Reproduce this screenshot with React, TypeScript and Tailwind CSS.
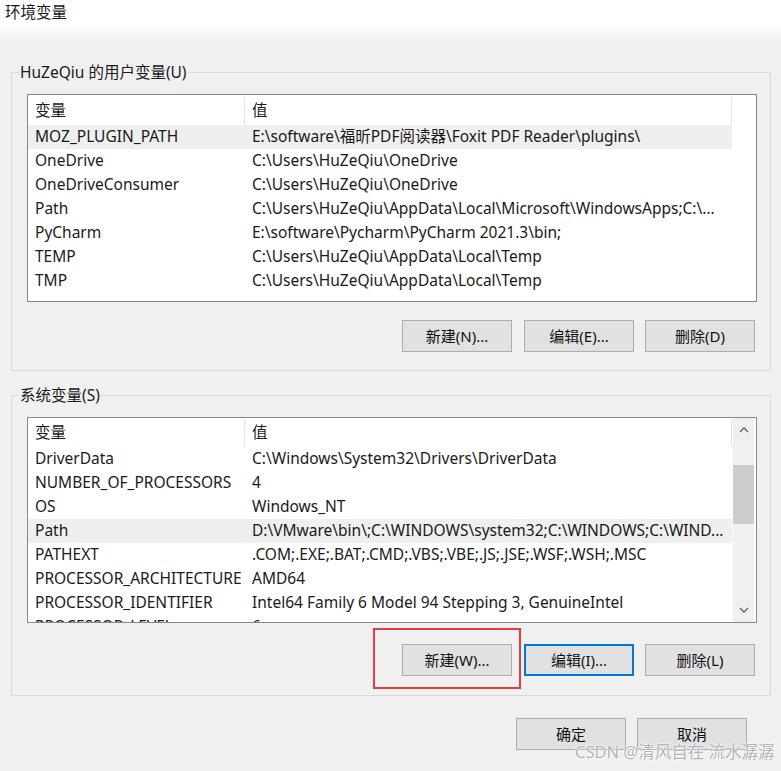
import React from 'react';

const userVars: [string, string][] = [
  ['MOZ_PLUGIN_PATH', 'E:\\software\\福昕PDF阅读器\\Foxit PDF Reader\\plugins\\'],
  ['OneDrive', 'C:\\Users\\HuZeQiu\\OneDrive'],
  ['OneDriveConsumer', 'C:\\Users\\HuZeQiu\\OneDrive'],
  ['Path', 'C:\\Users\\HuZeQiu\\AppData\\Local\\Microsoft\\WindowsApps;C:\\...'],
  ['PyCharm', 'E:\\software\\Pycharm\\PyCharm 2021.3\\bin;'],
  ['TEMP', 'C:\\Users\\HuZeQiu\\AppData\\Local\\Temp'],
  ['TMP', 'C:\\Users\\HuZeQiu\\AppData\\Local\\Temp'],
];

const sysVars: [string, string][] = [
  ['DriverData', 'C:\\Windows\\System32\\Drivers\\DriverData'],
  ['NUMBER_OF_PROCESSORS', '4'],
  ['OS', 'Windows_NT'],
  ['Path', 'D:\\VMware\\bin\\;C:\\WINDOWS\\system32;C:\\WINDOWS;C:\\WIND...'],
  ['PATHEXT', '.COM;.EXE;.BAT;.CMD;.VBS;.VBE;.JS;.JSE;.WSF;.WSH;.MSC'],
  ['PROCESSOR_ARCHITECTURE', 'AMD64'],
  ['PROCESSOR_IDENTIFIER', 'Intel64 Family 6 Model 94 Stepping 3, GenuineIntel'],
  ['PROCESSOR_LEVEL', '6'],
];

function Btn({ label, focused }: { label: string; focused?: boolean }) {
  return (
    <button
      className={`h-[32px] w-[110px] bg-[#e1e1e1] text-[15px] text-[#111] ${
        focused ? 'border-2 border-[#0078d7]' : 'border border-[#adadad]'
      }`}
    >
      {label}
    </button>
  );
}

function Header() {
  return (
    <div className="flex h-[28px] shrink-0 items-center bg-white">
      <div className="flex h-full w-[217px] items-center border-r border-[#e5e5e5] pl-[7px]">变量</div>
      <div className="flex h-full w-[487px] items-center border-r border-[#e5e5e5] pl-[7px]">值</div>
    </div>
  );
}

function Rows({ rows, selected }: { rows: [string, string][]; selected: number }) {
  return (
    <>
      {rows.map(([k, v], i) => (
        <div
          key={k + i}
          className={`flex h-[24px] w-[704px] shrink-0 items-center whitespace-nowrap ${i === selected ? 'bg-[#efefef]' : ''}`}
        >
          <div className="w-[217px] overflow-hidden pl-[7px]">{k}</div>
          <div className="w-[487px] overflow-hidden pl-[7px]">{v}</div>
        </div>
      ))}
    </>
  );
}

function Chevron({ up }: { up?: boolean }) {
  return (
    <svg width="10" height="6" viewBox="0 0 10 6" className={up ? '' : 'rotate-180'}>
      <path d="M1 5 L5 1 L9 5" fill="none" stroke="#606060" strokeWidth="1.3" />
    </svg>
  );
}

export default function App() {
  return (
    <div
      className="relative h-[771px] w-[781px] overflow-hidden bg-[#f0f0f0] text-[15.5px] text-[#1a1a1a]"
      style={{ fontFamily: '"Noto Sans", "Noto Sans CJK SC", sans-serif' }}
    >
      {/* title bar */}
      <div className="h-[40px] bg-gradient-to-b from-white from-60% to-[#f0f0f0] pl-[5px] pt-[1px] leading-[22px]">
        环境变量
      </div>

      {/* user variables */}
      <fieldset className="ml-[11px] mt-[22px] w-[759px] border border-[#d9d9d9] pb-[18px] pl-[15px] pr-[13px] pt-[12px]">
        <legend className="-ml-[8px] px-[1px] leading-[20px]">HuZeQiu 的用户变量(U)</legend>
        <div className="h-[208px] w-[730px] overflow-hidden border border-[#828790] bg-white pt-[2px]">
          <Header />
          <Rows rows={userVars} selected={0} />
        </div>
        <div className="mt-[18px] flex justify-end gap-[11px] pr-[2px]">
          <div className="mr-[1px]">
            <Btn label="新建(N)..." />
          </div>
          <Btn label="编辑(E)..." />
          <Btn label="删除(D)" />
        </div>
      </fieldset>

      {/* system variables */}
      <fieldset className="relative ml-[11px] mt-[14px] w-[759px] border border-[#d9d9d9] pb-[19px] pl-[15px] pr-[13px] pt-[12px]">
        <legend className="-ml-[8px] px-[1px] leading-[20px]">系统变量(S)</legend>
        <div className="flex h-[206px] w-[730px] overflow-hidden border border-[#828790] bg-white">
          <div className="flex w-[705px] flex-col overflow-hidden pt-[1px]">
            <Header />
            <Rows rows={sysVars} selected={3} />
          </div>
          <div className="flex w-[21px] flex-col bg-[#f0f0f0]">
            <div className="flex h-[24px] items-center justify-center">
              <Chevron up />
            </div>
            <div className="mt-[23px] h-[59px] bg-[#cdcdcd]" />
            <div className="flex-1" />
            <div className="flex h-[24px] items-center justify-center">
              <Chevron />
            </div>
          </div>
        </div>
        <div className="mt-[21px] flex justify-end gap-[11px] pr-[2px]">
          <div className="mr-[1px]">
            <Btn label="新建(W)..." />
          </div>
          <Btn label="编辑(I)..." focused />
          <Btn label="删除(L)" />
        </div>
        {/* red annotation box */}
        <div className="pointer-events-none absolute left-[361px] top-[223px] h-[61px] w-[148px] border-2 border-[#e53d3f]" />
      </fieldset>

      {/* OK / Cancel */}
      <div className="mt-[22px] flex justify-end gap-[11px] pr-[34px]">
        <Btn label="确定" />
        <Btn label="取消" />
      </div>

      {/* watermark */}
      <div
        className="pointer-events-none absolute left-[575px] top-[740px] whitespace-nowrap text-[16.5px] leading-[24px] text-[#b4b4b4]"
        style={{ textShadow: '0 0 2px #fff, 0 0 2px #fff' }}
      >
        CSDN @清风自在 流水潺潺
      </div>
    </div>
  );
}
